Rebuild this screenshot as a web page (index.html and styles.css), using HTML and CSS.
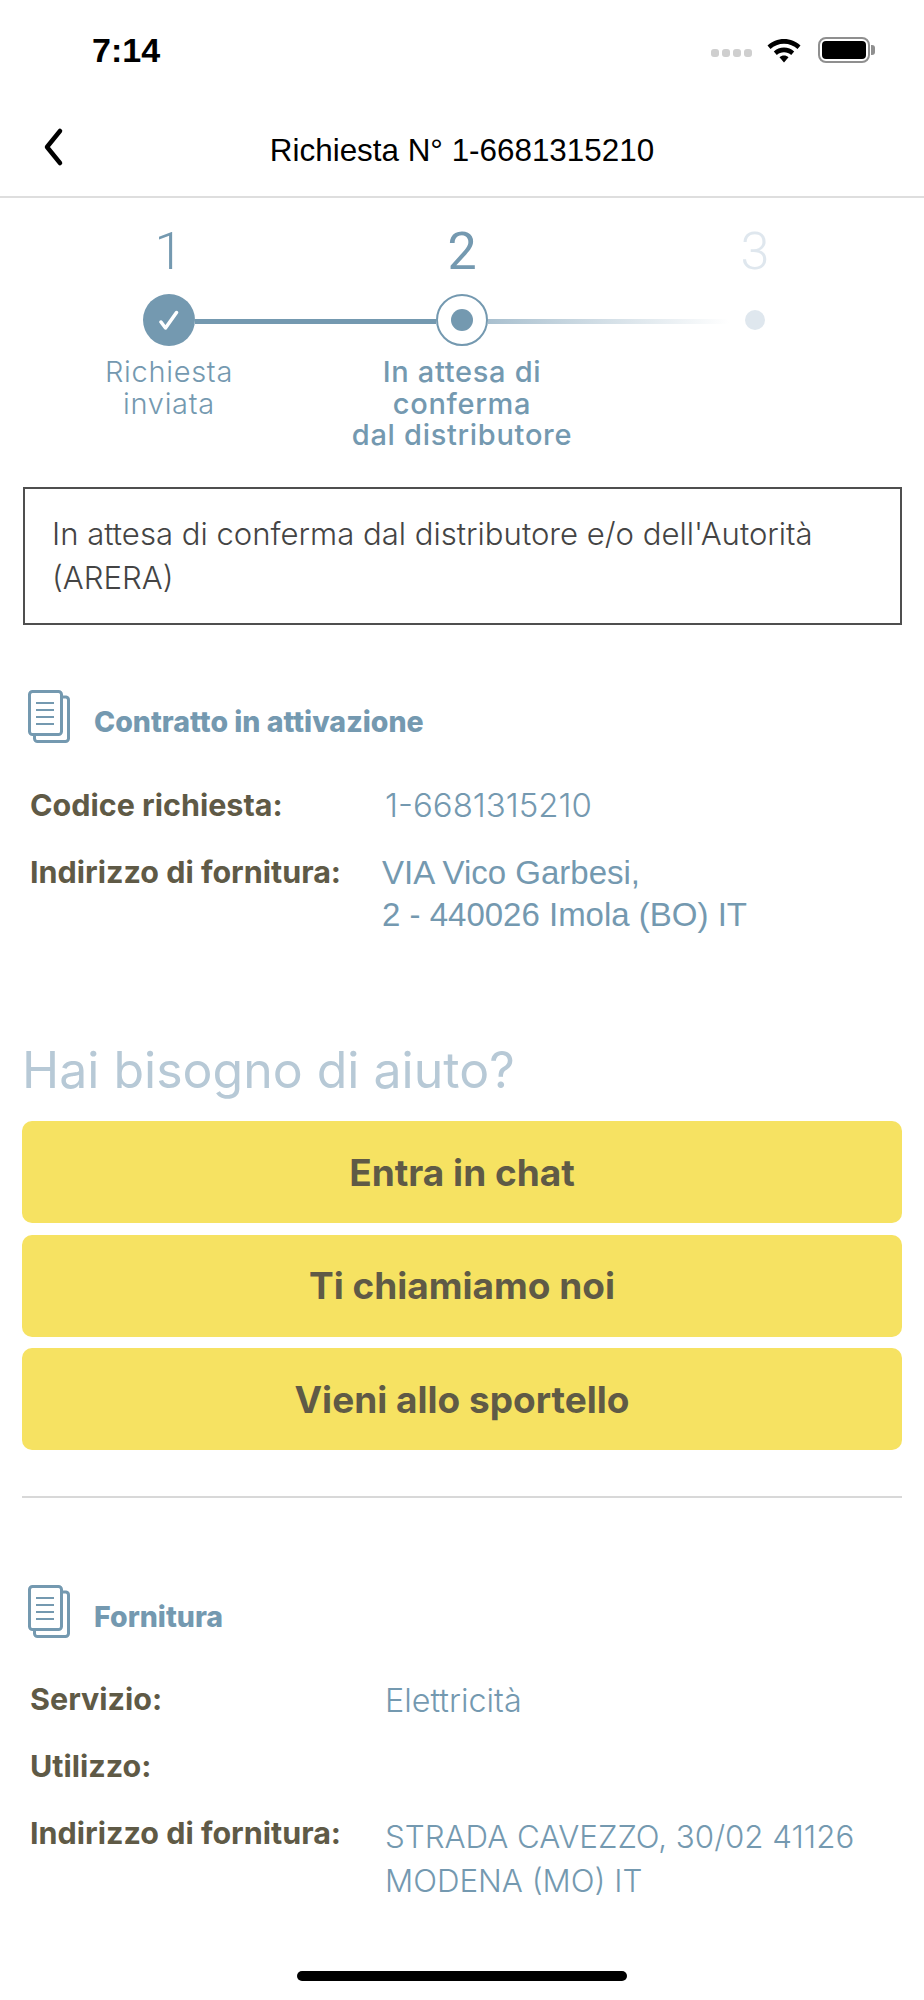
FILE: index.html
```html
<!DOCTYPE html>
<html lang="it">
<head>
<meta charset="utf-8">
<title>Richiesta</title>
<link rel="stylesheet" href="styles.css">
</head>
<body>
<div class="page">
  <div class="status">
    <span class="time">7:14</span>
    <div class="status-icons">
      <div class="signal"><i></i><i></i><i></i><i></i></div>
      <svg class="wifi" width="36" height="28" viewBox="0 0 36 28"><path d="M18 3C11.500 3 6 5.500 1.500 9.500L4.500 13C8 9.800 12.800 7.800 18 7.800S28 9.800 31.500 13L34.500 9.500C30 5.500 24.500 3 18 3Z"/><path d="M18 11.500C14 11.500 10.500 13 7.800 15.500L10.800 19C12.800 17.200 15.200 16.200 18 16.200S23.200 17.200 25.200 19L28.200 15.500C25.500 13 22 11.500 18 11.500Z"/><path d="M18 19.500C16.200 19.500 14.800 20.100 13.500 21.200L18 26.500L22.500 21.200C21.200 20.100 19.800 19.500 18 19.500Z"/></svg>
      <div class="battery"><div class="battery-fill"></div></div>
    </div>
  </div>
  <header class="nav">
    <svg class="back" width="24" height="40" viewBox="0 0 24 40"><path d="M19 4L6 20L19 36" fill="none" stroke="#000" stroke-width="4.500" stroke-linecap="round" stroke-linejoin="round"/></svg>
    <h1 class="nav-title">Richiesta N° 1-6681315210</h1>
  </header>

  <section class="steps">
    <div class="step step-one">
      <div class="step-num">1</div>
      <div class="step-mark mark-done">
        <svg width="20" height="24" viewBox="0 0 20 24"><path d="M2 14L6.500 20L17.500 4.500" fill="none" stroke="#fff" stroke-width="3.500" stroke-linecap="round" stroke-linejoin="round"/></svg>
      </div>
      <div class="step-label">Richiesta<br>inviata</div>
    </div>
    <div class="connector connector-solid"></div>
    <div class="step step-two">
      <div class="step-num">2</div>
      <div class="step-mark mark-current"><span></span></div>
      <div class="step-label label-active">In attesa di<br>conferma<br>dal distributore</div>
    </div>
    <div class="connector connector-fade"></div>
    <div class="step step-three">
      <div class="step-num num-off">3</div>
      <div class="step-mark mark-off"><span></span></div>
    </div>
  </section>

  <div class="notice">In attesa di conferma dal distributore e/o dell'Autorità (ARERA)</div>

  <section class="block block-first">
    <div class="block-head">
      <svg class="doc" width="44" height="54" viewBox="0 0 44 54"><path d="M35 7H38A3 3 0 0 1 40.500 10V48.500A3 3 0 0 1 37.500 51.500H9.500A3 3 0 0 1 6.500 48.500V46" fill="none" stroke="#7499b0" stroke-width="3"/><rect x="1.500" y="1.500" width="32" height="43" rx="3" fill="none" stroke="#7499b0" stroke-width="3"/><path d="M8 13H26M8 20H26M8 27H26M8 34H26" stroke="#7499b0" stroke-width="2"/></svg>
      <h2 class="block-title">Contratto in attivazione</h2>
    </div>
    <div class="row row-code">
      <div class="row-key">Codice richiesta:</div>
      <div class="row-val val-code">1-6681315210</div>
    </div>
    <div class="row row-addr">
      <div class="row-key">Indirizzo di fornitura:</div>
      <div class="row-val val-helv">VIA Vico Garbesi,<br>2 - 440026 Imola (BO) IT</div>
    </div>
  </section>

  <section class="help">
    <h2 class="help-title">Hai bisogno di aiuto?</h2>
    <button class="cta">Entra in chat</button>
    <button class="cta">Ti chiamiamo noi</button>
    <button class="cta">Vieni allo sportello</button>
  </section>

  <hr class="rule">

  <section class="block">
    <div class="block-head">
      <svg class="doc" width="44" height="54" viewBox="0 0 44 54"><path d="M35 7H38A3 3 0 0 1 40.500 10V48.500A3 3 0 0 1 37.500 51.500H9.500A3 3 0 0 1 6.500 48.500V46" fill="none" stroke="#7499b0" stroke-width="3"/><rect x="1.500" y="1.500" width="32" height="43" rx="3" fill="none" stroke="#7499b0" stroke-width="3"/><path d="M8 13H26M8 20H26M8 27H26M8 34H26" stroke="#7499b0" stroke-width="2"/></svg>
      <h2 class="block-title">Fornitura</h2>
    </div>
    <div class="row row-service">
      <div class="row-key">Servizio:</div>
      <div class="row-val val-service">Elettricità</div>
    </div>
    <div class="row row-use">
      <div class="row-key">Utilizzo:</div>
      <div class="row-val"></div>
    </div>
    <div class="row row-strada">
      <div class="row-key">Indirizzo di fornitura:</div>
      <div class="row-val val-wide">STRADA CAVEZZO, 30/02 41126<br>MODENA (MO) IT</div>
    </div>
  </section>
  <div class="home"></div>
</div>
</body>
</html>
```
FILE: styles.css
```css
* { box-sizing: border-box; }
html, body { margin: 0; padding: 0; background: #fff; }
.page {
  position: relative;
  width: 924px;
  height: 2000px;
  overflow: hidden;
  font-family: "Inter", "Liberation Sans", sans-serif;
  color: #5f5a46;
}
.status {
  height: 100px;
  display: flex;
  justify-content: space-between;
  align-items: center;
  padding: 0 54px 0 92px;
}
.time {
  font-family: "Liberation Sans", sans-serif;
  font-weight: 700;
  font-size: 34px;
  color: #000;
}
.status-icons { display: flex; align-items: center; }
.signal { display: flex; gap: 3px; margin-right: 14px; margin-top: 6px; }
.signal i { display: block; width: 8px; height: 8px; border-radius: 3px; background: #cfcfcf; }
.wifi { fill: #000; margin-right: 16px; }
.battery {
  position: relative;
  width: 52px;
  height: 26px;
  border: 2px solid #8f8f8f;
  border-radius: 8px;
  padding: 2px;
}
.battery::after {
  content: "";
  position: absolute;
  right: -7px;
  top: 6px;
  width: 4px;
  height: 10px;
  background: #8f8f8f;
  border-radius: 0 3px 3px 0;
}
.battery-fill { width: 100%; height: 100%; background: #000; border-radius: 4px; }
.nav {
  height: 98px;
  display: flex;
  align-items: center;
  justify-content: center;
  position: relative;
  border-bottom: 2px solid #dedede;
  padding-top: 5px;
}
.back { position: absolute; left: 41px; top: 27px; }
.nav-title {
  margin: 0;
  font-family: "Liberation Sans", sans-serif;
  font-weight: 400;
  font-size: 31.400px;
  color: #000;
}
.steps {
  display: flex;
  height: 253px;
  padding-left: 64px;
  padding-top: 28px;
}
.step { display: flex; flex-direction: column; align-items: center; width: 210px; flex: none; }
.step-num { font-size: 52px; line-height: 52px; height: 53px; color: #7499b0; font-weight: 300; font-family: "Roboto", sans-serif; }
.step-two .step-num { font-weight: 400; }
.num-off { color: #dfe7ee; }
.step-mark {
  width: 52px;
  height: 52px;
  flex: none;
  margin-top: 15px;
  border-radius: 50%;
  display: flex;
  align-items: center;
  justify-content: center;
}
.mark-done { background: #7499b0; }
.mark-current { border: 2px solid #7499b0; }
.mark-current span { width: 22px; height: 22px; border-radius: 50%; background: #7499b0; }
.mark-off span { width: 20px; height: 20px; border-radius: 50%; background: #dfe7ee; }
.step-label {
  margin-top: 10px;
  text-align: center;
  font-weight: 300;
  font-size: 29px;
  letter-spacing: 0.700px;
  line-height: 31.500px;
  color: #7499b0;
  white-space: nowrap;
}
.label-active { font-weight: 500; }
.connector { flex: none; height: 5px; width: 241px; margin: 93px -79px 0; position: relative; z-index: 1; }
.connector-solid { background: #7499b0; }
.connector-fade { background: linear-gradient(to right, #a9c0cf, #fff); }
.notice {
  margin: 36px 22px 0 23px;
  height: 138px;
  border: 2px solid #4f4f4f;
  padding: 23px 27px 0;
  font-size: 31.100px;
  line-height: 44px;
  font-weight: 300;
  color: #444;
}
.block { padding: 0 30px; margin-top: 87px; }
.block-first { margin-top: 65px; }
.block-head { display: flex; align-items: center; margin-left: -2px; height: 54px; }
.doc { flex: none; }
.block-title {
  margin: 8px 0 0 22px;
  font-size: 28.500px;
  font-weight: 800;
  color: #7499b0;
}
.row { display: flex; }
.row-key { width: 355px; flex: none; font-weight: 700; font-size: 30.500px; line-height: 36px; color: #5f5a46; }
.row-val { font-weight: 300; font-size: 31.500px; line-height: 36px; color: #7499b0; }
.val-code { font-size: 33px; }
.val-service { font-size: 32.300px; margin-top: 2px; }
.val-helv { font-family: "Liberation Sans", sans-serif; font-weight: 400; font-size: 33px; line-height: 42px; margin-left: -3px; margin-top: -2px; }
.val-wide { line-height: 44px; font-size: 31.300px; }
.row-code { margin-top: 43px; }
.row-addr { margin-top: 31px; }
.help { padding: 0 22px; margin-top: 104px; }
.help-title { margin: 0 0 21px; font-size: 50px; line-height: 60px; font-weight: 400; color: #b7c9d6; }
.cta {
  display: block;
  width: 100%;
  height: 102px;
  margin-bottom: 11.500px;
  border: 0;
  border-radius: 10px;
  background: #f6e262;
  color: #5f5a46;
  font-family: "Inter", sans-serif;
  font-weight: 700;
  font-size: 37px;
}
.rule { margin: 46px 22px 0; border: 0; height: 2px; background: #d8d8d8; }
.row-service { margin-top: 42px; }
.row-use { margin-top: 29px; }
.row-strada { margin-top: 31px; }
.home { position: absolute; left: 297px; top: 1971px; width: 330px; height: 10px; border-radius: 5px; background: #000; }
```
